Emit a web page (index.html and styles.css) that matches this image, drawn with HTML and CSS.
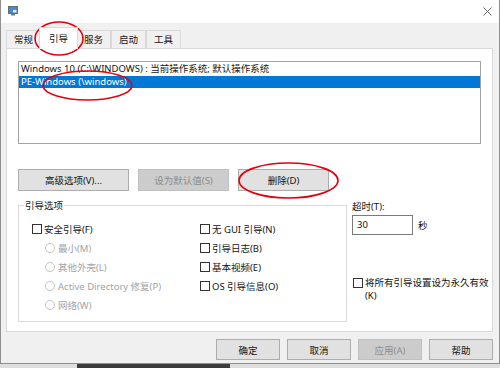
FILE: index.html
```html
<!DOCTYPE html>
<html lang="zh-CN">
<head>
    <meta charset="UTF-8">
    <title>系统配置</title>
    <link rel="stylesheet" href="styles.css">
</head>
<body>

<div class="window">
    <!-- barra de título -->
    <div class="titlebar">
        <svg class="app-icon" width="10" height="10" viewBox="0 0 10 10">
            <rect x="0.5" y="0.5" width="9" height="7" fill="#5d7fa8" stroke="#6b6b6b"/>
            <rect x="1.5" y="1.5" width="7" height="5" fill="#3d8ee0"/>
            <rect x="5" y="4" width="3.5" height="2.5" fill="#e8eef5"/>
            <rect x="3" y="8" width="4" height="1.5" fill="#7a7a7a"/>
        </svg>
        <svg class="close" width="9" height="9" viewBox="0 0 9 9">
            <path d="M0.5 0.5 L8.5 8.5 M8.5 0.5 L0.5 8.5" stroke="#5a5a5a" stroke-width="0.9"/>
        </svg>
    </div>

    <div class="main">
        <div class="tabs">
            <div class="tab">常规</div>
            <div class="tab active">引导</div>
            <div class="tab">服务</div>
            <div class="tab">启动</div>
            <div class="tab">工具</div>
        </div>

        <div class="page">
            <div class="list">
                <div class="list-row">Windows 10 (C:\WINDOWS) : 当前操作系统; 默认操作系统</div>
                <div class="list-row selected">PE-Windows (\windows)</div>
            </div>

            <div class="btn-row">
                <button class="btn wide">高级选项(V)...</button>
                <button class="btn mid" disabled>设为默认值(S)</button>
                <button class="btn mid">删除(D)</button>
            </div>

            <div class="lower">
                <div class="group">
                    <div class="legend">引导选项</div>
                    <div class="opt-cols">
                        <div class="opt-col left">
                            <div class="opt"><span class="box"></span>安全引导(F)</div>
                            <div class="opt off sub"><span class="radio"></span>最小(M)</div>
                            <div class="opt off sub"><span class="radio"></span>其他外壳(L)</div>
                            <div class="opt off sub"><span class="radio"></span>Active Directory 修复(P)</div>
                            <div class="opt off sub"><span class="radio"></span>网络(W)</div>
                        </div>
                        <div class="opt-col">
                            <div class="opt"><span class="box"></span>无 GUI 引导(N)</div>
                            <div class="opt"><span class="box"></span>引导日志(B)</div>
                            <div class="opt"><span class="box"></span>基本视频(E)</div>
                            <div class="opt"><span class="box"></span>OS 引导信息(O)</div>
                        </div>
                    </div>
                </div>

                <div class="side">
                    <div class="side-label">超时(T):</div>
                    <div class="timeout">
                        <div class="input">30</div>
                        <span>秒</span>
                    </div>
                    <div class="permanent">
                        <span class="box"></span>
                        <span>将所有引导设置设为永久有效<br>(K)</span>
                    </div>
                </div>
            </div>
        </div>

        <div class="footer">
            <button class="btn foot">确定</button>
            <button class="btn foot">取消</button>
            <button class="btn foot" disabled>应用(A)</button>
            <button class="btn foot">帮助</button>
        </div>
    </div>

    <!-- marcas rojas encima de la captura -->
    <svg class="marks" width="500" height="368" viewBox="0 0 500 368">
        <ellipse cx="59" cy="38.5" rx="24" ry="16.5" fill="none" stroke="#e3000f" stroke-width="1.6"/>
        <ellipse cx="87.5" cy="85.5" rx="44.5" ry="14.5" fill="none" stroke="#e3000f" stroke-width="1.6"/>
        <ellipse cx="288.5" cy="180.5" rx="49.5" ry="17.5" fill="none" stroke="#e3000f" stroke-width="1.6"/>
    </svg>
</div>

<div class="desk">
    <div class="desk-dark"></div>
</div>

</body>
</html>
```

FILE: styles.css
```css
body {
    margin: 0;
    width: 500px;
    height: 368px;
    overflow: hidden;
    background-color: #d6d6d6;
    font-family: "Noto Sans", "Noto Sans CJK SC", sans-serif;
    font-size: 9.5px;
    color: #141414;
}

.window {
    position: relative;
    height: 364px;
    box-sizing: border-box;
    border: 1px solid #8f8f8f;
    border-top: none;
    background-color: #f0f0f0;
    display: flex;
    flex-direction: column;
}

.titlebar {
    flex-shrink: 0;
    height: 23px;
    background-color: #fff;
    display: flex;
    align-items: center;
    justify-content: space-between;
    padding: 0 8px 0 7px;
}

.app-icon {
    margin-top: -2px;
}

.close {
    margin-right: -1px;
    margin-top: -1px;
}

.main {
    flex: 1;
    padding: 5px 6px 0 5px;
    display: flex;
    flex-direction: column;
}

.tabs {
    display: flex;
    align-items: flex-end;
    height: 20px;
    flex-shrink: 0;
}

.tab {
    height: 17px;
    line-height: 17px;
    padding: 0 7px;
    border: 1px solid #d9d9d9;
    border-bottom: none;
    background-color: #f0f0f0;
}

.tab.active {
    position: relative;
    z-index: 1;
    height: 21px;
    line-height: 21px;
    margin: 0 -2px -1px;
    padding: 0 9px;
    background-color: #fff;
}

.page {
    flex-shrink: 0;
    height: 284px;
    box-sizing: border-box;
    border: 1px solid #d9d9d9;
    background-color: #fff;
    padding: 12px 11px 0 11px;
}

.list {
    width: 463px;
    height: 83px;
    box-sizing: border-box;
    border: 1px solid #a3a3a3;
    padding-top: 1px;
}

.list-row {
    height: 12.5px;
    line-height: 12.5px;
    padding: 0 2px;
    white-space: nowrap;
}

.list-row.selected {
    background-color: #0078d7;
    color: #fff;
}

.btn {
    font-family: inherit;
    font-size: 9.5px;
    color: #141414;
    background-color: #e1e1e1;
    border: 1px solid #adadad;
    padding: 0;
    height: 22px;
}

.btn:disabled {
    background-color: #cccccc;
    border-color: #bfbfbf;
    color: #8c8c8c;
}

.btn-row {
    display: flex;
    gap: 9px;
    margin-top: 25px;
}

.btn.wide { width: 111px; }
.btn.mid { width: 91px; }

.lower {
    display: flex;
    gap: 5px;
    margin-top: 9px;
}

.group {
    width: 329px;
    height: 117px;
    box-sizing: border-box;
    margin-top: 5px;
    border: 1px solid #dcdcdc;
    flex-shrink: 0;
}

.legend {
    width: fit-content;
    margin: -6px 0 0 5px;
    padding: 0 1px;
    line-height: 12px;
    background-color: #fff;
}

.opt-cols {
    display: flex;
    padding: 7px 0 0 13px;
}

.opt-col.left {
    width: 168px;
}

.opt {
    height: 19px;
    display: flex;
    align-items: center;
    white-space: nowrap;
}

.opt.sub {
    padding-left: 13px;
}

.opt.off {
    color: #a3a3a3;
}

.box {
    width: 8px;
    height: 8px;
    border: 1px solid #333;
    background-color: #fff;
    margin-right: 2px;
    flex-shrink: 0;
}

.radio {
    width: 8px;
    height: 8px;
    border: 1px solid #c4c4c4;
    border-radius: 50%;
    margin-right: 3px;
}

.side {
    flex: 1;
}

.side-label {
    line-height: 14px;
}

.timeout {
    display: flex;
    align-items: center;
    gap: 5px;
    margin-top: 1px;
}

.input {
    width: 61px;
    height: 20px;
    box-sizing: border-box;
    border: 1px solid #7a7a7a;
    line-height: 18px;
    padding-left: 4px;
}

.permanent {
    display: flex;
    align-items: flex-start;
    margin-top: 41px;
    line-height: 13px;
    white-space: nowrap;
}

.permanent .box {
    margin: 2px 2px 0 1px;
}

.footer {
    display: flex;
    justify-content: flex-end;
    gap: 7px;
    margin-top: 7px;
}

.btn.foot {
    width: 64px;
    height: 21px;
}

.marks {
    position: absolute;
    left: -1px;
    top: 0;
    pointer-events: none;
}

.desk {
    height: 4px;
    background-color: #dedede;
    padding-left: 77px;
}

.desk-dark {
    width: 153px;
    height: 4px;
    background-color: #3b3b3b;
}
```
